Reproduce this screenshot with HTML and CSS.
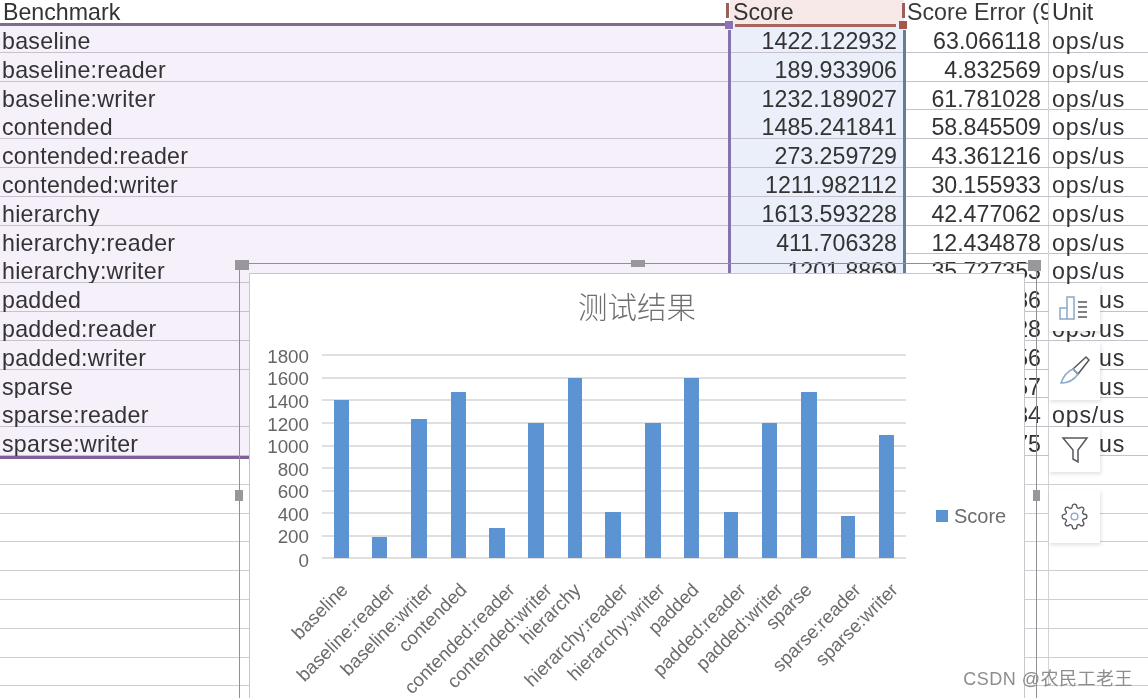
FILE: index.html
```html
<!DOCTYPE html>
<html lang="zh-CN">
<head>
    <meta charset="UTF-8">
    <title>测试结果</title>
    <link rel="stylesheet" href="styles.css">
</head>
<body>
<div class="page">
    <div class="sheet">
        <div class="row head"><div class="cell">Benchmark</div><div class="cell score-head">Score</div><div class="cell clip">Score Error (9</div><div class="cell">Unit</div></div>
        <div class="row sel"><div class="cell">baseline</div><div class="cell num">1422.122932</div><div class="cell num">63.066118</div><div class="cell">ops/us</div></div>
        <div class="row sel"><div class="cell">baseline:reader</div><div class="cell num">189.933906</div><div class="cell num">4.832569</div><div class="cell">ops/us</div></div>
        <div class="row sel"><div class="cell">baseline:writer</div><div class="cell num">1232.189027</div><div class="cell num">61.781028</div><div class="cell">ops/us</div></div>
        <div class="row sel"><div class="cell">contended</div><div class="cell num">1485.241841</div><div class="cell num">58.845509</div><div class="cell">ops/us</div></div>
        <div class="row sel"><div class="cell">contended:reader</div><div class="cell num">273.259729</div><div class="cell num">43.361216</div><div class="cell">ops/us</div></div>
        <div class="row sel"><div class="cell">contended:writer</div><div class="cell num">1211.982112</div><div class="cell num">30.155933</div><div class="cell">ops/us</div></div>
        <div class="row sel"><div class="cell">hierarchy</div><div class="cell num">1613.593228</div><div class="cell num">42.477062</div><div class="cell">ops/us</div></div>
        <div class="row sel"><div class="cell">hierarchy:reader</div><div class="cell num">411.706328</div><div class="cell num">12.434878</div><div class="cell">ops/us</div></div>
        <div class="row sel"><div class="cell">hierarchy:writer</div><div class="cell num">1201.8869</div><div class="cell num">35.727353</div><div class="cell">ops/us</div></div>
        <div class="row sel"><div class="cell">padded</div><div class="cell num"></div><div class="cell num">86</div><div class="cell">ops/us</div></div>
        <div class="row sel"><div class="cell">padded:reader</div><div class="cell num"></div><div class="cell num">28</div><div class="cell">ops/us</div></div>
        <div class="row sel"><div class="cell">padded:writer</div><div class="cell num"></div><div class="cell num">56</div><div class="cell">ops/us</div></div>
        <div class="row sel"><div class="cell">sparse</div><div class="cell num"></div><div class="cell num">57</div><div class="cell">ops/us</div></div>
        <div class="row sel"><div class="cell">sparse:reader</div><div class="cell num"></div><div class="cell num">84</div><div class="cell">ops/us</div></div>
        <div class="row sel"><div class="cell">sparse:writer</div><div class="cell num"></div><div class="cell num">75</div><div class="cell">ops/us</div></div>
        <div class="row"><div class="cell"></div><div class="cell"></div><div class="cell"></div><div class="cell"></div></div>
        <div class="row"><div class="cell"></div><div class="cell"></div><div class="cell"></div><div class="cell"></div></div>
        <div class="row"><div class="cell"></div><div class="cell"></div><div class="cell"></div><div class="cell"></div></div>
        <div class="row"><div class="cell"></div><div class="cell"></div><div class="cell"></div><div class="cell"></div></div>
        <div class="row"><div class="cell"></div><div class="cell"></div><div class="cell"></div><div class="cell"></div></div>
        <div class="row"><div class="cell"></div><div class="cell"></div><div class="cell"></div><div class="cell"></div></div>
        <div class="row"><div class="cell"></div><div class="cell"></div><div class="cell"></div><div class="cell"></div></div>
        <div class="row"><div class="cell"></div><div class="cell"></div><div class="cell"></div><div class="cell"></div></div>
    </div>

    <!-- selection marks on the sheet -->
    <div class="mark line-top"></div>
    <div class="mark line-bottom"></div>
    <div class="mark line-left"></div>
    <div class="mark line-right"></div>
    <div class="mark line-score"></div>
    <div class="mark tick-a"></div>
    <div class="mark tick-b"></div>
    <div class="mark dot-a"></div>
    <div class="mark dot-b"></div>

    <!-- chart frame and handles -->
    <div class="frame"></div>
    <div class="mark grip grip-tl"></div>
    <div class="mark grip grip-tm"></div>
    <div class="mark grip grip-tr"></div>
    <div class="mark grip grip-ml"></div>
    <div class="mark grip grip-mr"></div>

    <div class="chart">
        <svg class="plot" width="774" height="424" viewBox="250 274 774 424">
            <text class="title" x="637" y="318" text-anchor="middle">测试结果</text>
            <g class="grid">
                <line x1="322" x2="906" y1="355" y2="355"/>
                <line x1="322" x2="906" y1="378" y2="378"/>
                <line x1="322" x2="906" y1="400" y2="400"/>
                <line x1="322" x2="906" y1="423" y2="423"/>
                <line x1="322" x2="906" y1="446" y2="446"/>
                <line x1="322" x2="906" y1="468" y2="468"/>
                <line x1="322" x2="906" y1="491" y2="491"/>
                <line x1="322" x2="906" y1="513" y2="513"/>
                <line x1="322" x2="906" y1="536" y2="536"/>
                <line x1="322" x2="906" y1="558" y2="558"/>
            </g>
            <g class="axis" text-anchor="end">
                <text x="309" y="363">1800</text>
                <text x="309" y="385">1600</text>
                <text x="309" y="408">1400</text>
                <text x="309" y="431">1200</text>
                <text x="309" y="453">1000</text>
                <text x="309" y="476">800</text>
                <text x="309" y="498">600</text>
                <text x="309" y="521">400</text>
                <text x="309" y="543">200</text>
                <text x="309" y="567">0</text>
            </g>
            <g class="bars">
                <rect x="334" y="400" width="15" height="158"/>
                <rect x="372" y="537" width="15" height="21"/>
                <rect x="411" y="419" width="16" height="139"/>
                <rect x="451" y="392" width="15" height="166"/>
                <rect x="489" y="528" width="16" height="30"/>
                <rect x="528" y="423" width="16" height="135"/>
                <rect x="568" y="378" width="14" height="180"/>
                <rect x="605" y="512" width="16" height="46"/>
                <rect x="645" y="423" width="16" height="135"/>
                <rect x="684" y="378" width="15" height="180"/>
                <rect x="724" y="512" width="14" height="46"/>
                <rect x="762" y="423" width="15" height="135"/>
                <rect x="801" y="392" width="16" height="166"/>
                <rect x="841" y="516" width="14" height="42"/>
                <rect x="879" y="435" width="15" height="123"/>
            </g>
            <g class="labels" text-anchor="end">
                <text transform="translate(349 591) rotate(-45)">baseline</text>
                <text transform="translate(396 591) rotate(-45)">baseline:reader</text>
                <text transform="translate(434 591) rotate(-45)">baseline:writer</text>
                <text transform="translate(468 591) rotate(-45)">contended</text>
                <text transform="translate(516 591) rotate(-45)">contended:reader</text>
                <text transform="translate(553 591) rotate(-45)">contended:writer</text>
                <text transform="translate(582 591) rotate(-45)">hierarchy</text>
                <text transform="translate(629 591) rotate(-45)">hierarchy:reader</text>
                <text transform="translate(666 591) rotate(-45)">hierarchy:writer</text>
                <text transform="translate(700 591) rotate(-45)">padded</text>
                <text transform="translate(747 591) rotate(-45)">padded:reader</text>
                <text transform="translate(784 591) rotate(-45)">padded:writer</text>
                <text transform="translate(813 591) rotate(-45)">sparse</text>
                <text transform="translate(862 591) rotate(-45)">sparse:reader</text>
                <text transform="translate(899 591) rotate(-45)">sparse:writer</text>
            </g>
            <rect class="key" x="936" y="510" width="12" height="12"/>
            <text class="legend" x="954" y="523">Score</text>
        </svg>
    </div>

    <div class="tools">
        <div class="tool tool-bars">
            <svg width="34" height="30" viewBox="0 0 34 30" fill="none">
                <path class="blue" d="M2 26V15h7v11zM9 26V4h7v22z"/>
                <path class="dark" d="M20 9h9M20 14h9M20 19h9M20 24h9"/>
            </svg>
        </div>
        <div class="tool tool-brush">
            <svg width="34" height="34" viewBox="0 0 34 34" fill="none">
                <path class="dark" d="M15 15L28 3l3 3-11 14zM15 15l5 5"/>
                <path class="blue" d="M15 15c-5 2-9 6-12 14 6 0 13-3 17-9z"/>
            </svg>
        </div>
        <div class="tool tool-filter">
            <svg width="28" height="28" viewBox="0 0 28 28" fill="none">
                <path class="dark" d="M2 2h24L17 14v12l-5-3v-9z"/>
            </svg>
        </div>
        <div class="tool tool-gear">
            <svg width="27" height="27" viewBox="0 0 24 24" fill="none">
                <path class="dark thin" d="M19.4 15a1.65 1.65 0 0 0 .33 1.82l.06.06a2 2 0 0 1 0 2.83 2 2 0 0 1-2.83 0l-.06-.06a1.65 1.65 0 0 0-1.82-.33 1.65 1.65 0 0 0-1 1.51V21a2 2 0 0 1-2 2 2 2 0 0 1-2-2v-.09A1.65 1.65 0 0 0 9 19.4a1.65 1.65 0 0 0-1.82.33l-.06.06a2 2 0 0 1-2.83 0 2 2 0 0 1 0-2.83l.06-.06a1.65 1.65 0 0 0 .33-1.82 1.65 1.65 0 0 0-1.51-1H3a2 2 0 0 1-2-2 2 2 0 0 1 2-2h.09A1.65 1.65 0 0 0 4.6 9a1.65 1.65 0 0 0-.33-1.82l-.06-.06a2 2 0 0 1 0-2.83 2 2 0 0 1 2.83 0l.06.06a1.65 1.65 0 0 0 1.82.33H9a1.65 1.65 0 0 0 1-1.51V3a2 2 0 0 1 2-2 2 2 0 0 1 2 2v.09a1.65 1.65 0 0 0 1 1.51 1.65 1.65 0 0 0 1.82-.33l.06-.06a2 2 0 0 1 2.83 0 2 2 0 0 1 0 2.83l-.06.06a1.65 1.65 0 0 0-.33 1.82V9a1.65 1.65 0 0 0 1.51 1H21a2 2 0 0 1 2 2 2 2 0 0 1-2 2h-.09a1.65 1.65 0 0 0-1.51 1z"/>
                <circle class="blue thin" cx="12" cy="12" r="3"/>
            </svg>
        </div>
    </div>

    <div class="watermark">CSDN @农民工老王</div>
</div>
</body>
</html>
```

FILE: styles.css
```css
html, body {
    margin: 0;
    height: 100%;
    overflow: hidden;
    background: #fff;
}

.page {
    position: relative;
    width: 1148px;
    height: 698px;
    overflow: hidden;
    font-family: "Liberation Sans", Arial, sans-serif;
    color: #333;
    filter: blur(0.5px);
}

/* sheet */
.row {
    display: grid;
    grid-template-columns: 730px 174px 144px 100px;
    height: 28.8px;
    box-sizing: border-box;
    border-bottom: 1px solid #cfcfd2;
    font-size: 23.2px;
    line-height: 22px;
}

.row.head {
    height: 24px;
    line-height: 24px;
    border-bottom: 0;
}

.cell {
    padding: 6px 3px 0 2px;
    white-space: nowrap;
    box-sizing: border-box;
}

.head .cell {
    padding-top: 0;
    padding-left: 3px;
}

.row .cell:nth-child(4) {
    padding-left: 3px;
    border-left: 1px solid #d4d4d4;
}

.sel {
    border-bottom-color: #c6c1cc;
}

.sel .cell:first-child {
    background: #f6f0fb;
    letter-spacing: 0.28px;
}

.sel .cell:nth-child(2) {
    background: #eaeffa;
}

.sel .cell:nth-child(4) {
    letter-spacing: 0.8px;
}

.num {
    text-align: right;
    padding-right: 7px;
}

.score-head {
    background: #f6e9e8;
}

.clip {
    color: #3a3a3a;
    overflow: hidden;
}

/* selection marks */
.mark {
    position: absolute;
}

.line-top {
    left: 0;
    top: 23px;
    width: 726px;
    height: 3px;
    background: #7f6b92;
}

.line-bottom {
    left: 0;
    top: 456px;
    width: 250px;
    height: 3px;
    background: #7f5f98;
}

.line-left {
    left: 728px;
    top: 30px;
    width: 3px;
    height: 244px;
    background: #8673ad;
}

.line-right {
    left: 903px;
    top: 30px;
    width: 3px;
    height: 244px;
    background: #5f7f9c;
}

.line-score {
    left: 735px;
    top: 24px;
    width: 161px;
    height: 3px;
    background: #a7655c;
}

.tick-a, .tick-b {
    top: 3px;
    width: 3px;
    height: 15px;
    background: #9c5f57;
}

.tick-a { left: 726px; }
.tick-b { left: 902px; }

.dot-a, .dot-b {
    top: 21px;
    width: 8px;
    height: 8px;
}

.dot-a { left: 725px; background: #8a73b3; }
.dot-b { left: 899px; background: #a5574c; }

/* chart */
.frame {
    position: absolute;
    left: 239px;
    top: 263px;
    width: 796px;
    height: 460px;
    border: 1px solid #8f8f94;
}

.grip {
    background: #97979c;
}

.grip-tl { left: 235px; top: 260px; width: 14px; height: 10px; }
.grip-tm { left: 631px; top: 260px; width: 14px; height: 7px; }
.grip-tr { left: 1028px; top: 260px; width: 13px; height: 11px; }
.grip-ml { left: 235px; top: 490px; width: 8px; height: 11px; }
.grip-mr { left: 1033px; top: 490px; width: 7px; height: 11px; }

.chart {
    position: absolute;
    left: 250px;
    top: 274px;
    width: 774px;
    height: 424px;
    background: #fff;
    box-shadow: 0 0 0 1px #c8c8cc;
}

.plot {
    display: block;
}

.title {
    font-family: "Noto Sans CJK SC", sans-serif;
    font-size: 29.5px;
    font-weight: 300;
    fill: #6f6f6f;
}

.grid line {
    stroke: #d4d4d4;
    stroke-width: 1.4;
}

.axis text {
    font-size: 18.8px;
    fill: #666;
}

.bars rect, .key {
    fill: #5b93d3;
}

.labels text {
    font-size: 18.8px;
    fill: #6c6c6c;
}

.legend {
    font-size: 20px;
    fill: #6c6c6c;
}

/* buttons right of the chart */
.tools {
    position: absolute;
    left: 1049px;
    top: 285px;
    width: 51px;
    display: flex;
    flex-direction: column;
}

.tool {
    display: flex;
    align-items: center;
    justify-content: center;
    background: #fff;
    box-shadow: 1px 2px 4px rgba(0, 0, 0, 0.12);
}

.tool-bars { height: 46px; }
.tool-brush { height: 58px; margin-top: 11px; }
.tool-filter { height: 45px; margin-top: 27px; }
.tool-gear { height: 53px; margin-top: 18px; }

.dark {
    stroke: #56585e;
    stroke-width: 1.5;
}

.blue {
    stroke: #8aa6c8;
    stroke-width: 1.5;
}

.thin {
    stroke-width: 1.2;
}

.watermark {
    position: absolute;
    right: 15px;
    top: 668px;
    font-family: "Liberation Sans", "Noto Sans CJK SC", sans-serif;
    font-size: 18px;
    letter-spacing: 0.5px;
    line-height: 22px;
    color: #8d8d8d;
}
```
